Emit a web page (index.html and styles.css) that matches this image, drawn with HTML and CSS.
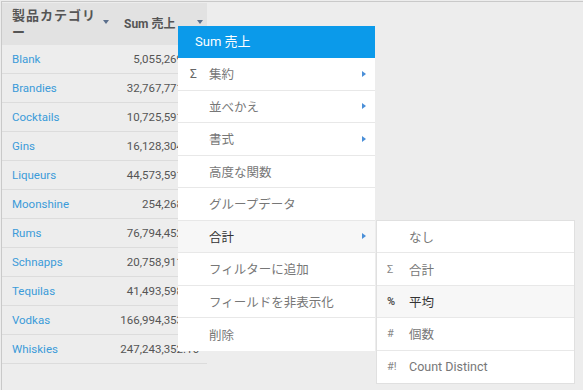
FILE: index.html
```html
<!DOCTYPE html>
<html lang="ja">

<head>
  <meta charset="UTF-8">
  <meta name="viewport" content="width=device-width, initial-scale=1.0">
  <title>Sum 売上</title>
  <link rel="stylesheet" href="styles.css">
</head>

<body>
  <div class="frame">
    <table class="report">
      <thead>
        <tr>
          <th class="col-name">
            <div class="th-inner">
              <span class="th-label wrap">製品カテゴリー</span>
              <span class="sort-arrow"></span>
            </div>
          </th>
          <th class="col-sum">
            <div class="th-inner">
              <span class="th-label">Sum 売上</span>
              <span class="sort-arrow"></span>
            </div>
          </th>
        </tr>
      </thead>
      <tbody>
        <tr><td class="name">Blank</td><td class="num">5,055,269.12</td></tr>
        <tr><td class="name">Brandies</td><td class="num">32,767,771.40</td></tr>
        <tr><td class="name">Cocktails</td><td class="num">10,725,591.80</td></tr>
        <tr><td class="name">Gins</td><td class="num">16,128,304.22</td></tr>
        <tr><td class="name">Liqueurs</td><td class="num">44,573,591.63</td></tr>
        <tr><td class="name">Moonshine</td><td class="num">254,268.40</td></tr>
        <tr><td class="name">Rums</td><td class="num">76,794,452.90</td></tr>
        <tr><td class="name">Schnapps</td><td class="num">20,758,911.35</td></tr>
        <tr><td class="name">Tequilas</td><td class="num">41,493,598.70</td></tr>
        <tr><td class="name">Vodkas</td><td class="num">166,994,353.58</td></tr>
        <tr><td class="name">Whiskies</td><td class="num">247,243,352.16</td></tr>
      </tbody>
    </table>

    <!-- column context menu -->
    <div class="menu">
      <div class="menu-title">Sum 売上</div>
      <ul class="menu-list">
        <li class="menu-item"><span class="menu-icon">Σ</span><span class="menu-text">集約</span><span class="sub-arrow"></span></li>
        <li class="menu-item"><span class="menu-icon"></span><span class="menu-text">並べかえ</span><span class="sub-arrow"></span></li>
        <li class="menu-item"><span class="menu-icon"></span><span class="menu-text">書式</span><span class="sub-arrow"></span></li>
        <li class="menu-item"><span class="menu-icon"></span><span class="menu-text">高度な関数</span></li>
        <li class="menu-item"><span class="menu-icon"></span><span class="menu-text">グループデータ</span></li>
        <li class="menu-item active"><span class="menu-icon"></span><span class="menu-text">合計</span><span class="sub-arrow"></span></li>
        <li class="menu-item"><span class="menu-icon"></span><span class="menu-text">フィルターに追加</span></li>
        <li class="menu-item"><span class="menu-icon"></span><span class="menu-text">フィールドを非表示化</span></li>
        <li class="menu-item"><span class="menu-icon"></span><span class="menu-text">削除</span></li>
      </ul>
    </div>

    <div class="submenu">
      <ul class="menu-list">
        <li class="menu-item"><span class="menu-icon"></span><span class="menu-text">なし</span></li>
        <li class="menu-item"><span class="menu-icon">Σ</span><span class="menu-text">合計</span></li>
        <li class="menu-item active"><span class="menu-icon">%</span><span class="menu-text">平均</span></li>
        <li class="menu-item"><span class="menu-icon">#</span><span class="menu-text">個数</span></li>
        <li class="menu-item"><span class="menu-icon">#!</span><span class="menu-text">Count Distinct</span></li>
      </ul>
    </div>
  </div>
</body>

</html>
```

FILE: styles.css
```css
body {
  margin: 0;
  padding: 1px 0 0 1px;
  background-color: #ededed;
  font-family: Roboto, "Noto Sans CJK JP", sans-serif;
  overflow: hidden;
}

.frame {
  position: relative;
  height: 389px;
  padding-top: 1px;
  border-top: 1px solid #c9c9c9;
  border-left: 1px solid #c9c9c9;
  box-sizing: border-box;
}

/* table */
.report {
  width: 205px;
  border-collapse: collapse;
  table-layout: fixed;
}

.report th {
  height: 42px;
  padding: 0;
  background-color: #e2e2e2;
  color: #555;
  font-size: 12px;
  font-weight: bold;
  text-align: left;
  vertical-align: middle;
}

.col-name {
  width: 111px;
}

.th-inner {
  display: flex;
  align-items: center;
  justify-content: space-between;
  padding: 0 4px 0 10px;
}

.col-sum .th-inner {
  padding-left: 11px;
}

.th-label {
  line-height: 17px;
}

.th-label.wrap {
  width: 86px;
  font-size: 13px;
  letter-spacing: 1px;
}

.sort-arrow {
  width: 0;
  height: 0;
  border-left: 3.5px solid transparent;
  border-right: 3.5px solid transparent;
  border-top: 4px solid #5b6f8c;
  margin-top: -4px;
}

.report td {
  height: 28px;
  padding: 0;
  border-bottom: 1px solid #dcdcdc;
  font-size: 11.5px;
  white-space: nowrap;
  overflow: visible;
}

.report td.name {
  padding-left: 10px;
  color: #3b9bd9;
}

.report td.num {
  padding-right: 8px;
  text-align: right;
  color: #555;
}

/* menus */
.menu,
.submenu {
  position: absolute;
  background-color: #fff;
  font-size: 12.5px;
}

.menu {
  left: 176px;
  top: 24px;
  width: 197px;
}

.submenu {
  left: 374px;
  top: 218px;
  width: 197px;
  border: 1px solid #e0e0e0;
}

.menu-title {
  height: 32px;
  line-height: 32px;
  padding-left: 17px;
  background-color: #0b9aea;
  color: #fff;
  font-size: 13px;
}

.menu-list {
  list-style: none;
  margin: 0;
  padding: 0;
}

.menu-item {
  display: flex;
  align-items: center;
  height: 32.5px;
  box-sizing: border-box;
  border-bottom: 1px solid #e8e8e8;
  color: #777;
}

.menu-item:last-child {
  border-bottom: none;
}

.submenu .menu-item {
  height: 32.4px;
}

.menu-item.active {
  background-color: #f7f7f7;
  color: #333;
}

.menu-icon {
  width: 31px;
  padding-left: 12px;
  box-sizing: border-box;
  font-size: 12px;
  color: #666;
}

.submenu .menu-icon {
  width: 32px;
  padding-left: 10px;
  font-size: 11px;
  color: #888;
}

.submenu .active .menu-icon {
  color: #555;
  font-weight: bold;
}

.menu-text {
  flex: 1;
}

.sub-arrow {
  width: 0;
  height: 0;
  margin-right: 9px;
  border-top: 3.5px solid transparent;
  border-bottom: 3.5px solid transparent;
  border-left: 4px solid #4a8fd8;
}
```
